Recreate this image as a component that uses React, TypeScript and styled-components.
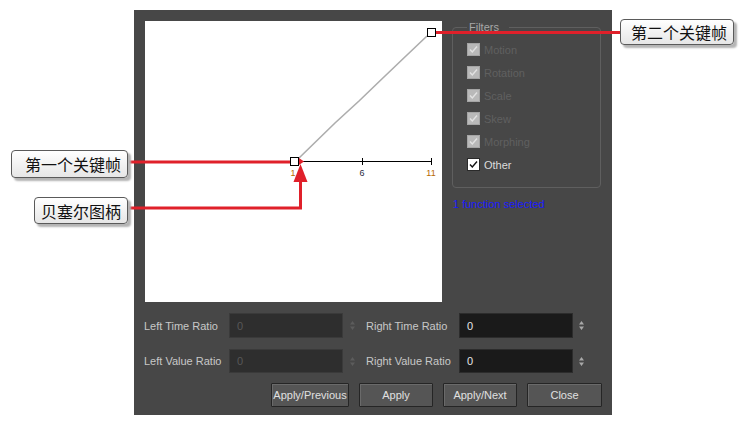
import React from "react";
import styled, { createGlobalStyle } from "styled-components";

const Global = createGlobalStyle`
  html, body { margin: 0; padding: 0; background: #ffffff; }
  * { box-sizing: border-box; }
`;

const Stage = styled.div`
  position: relative;
  width: 750px;
  height: 426px;
  overflow: hidden;
  background: #ffffff;
  padding: 10px 0 0 134px;
  font-family: "Liberation Sans", Arial, sans-serif;
`;

const Dialog = styled.div`
  width: 478px;
  height: 405px;
  background: #474747;
  padding: 11px 11px 8px 11px;
  display: flex;
  flex-direction: column;
`;

const Top = styled.div`
  display: flex;
  gap: 10px;
  height: 281px;
`;

const GraphPanel = styled.div`
  width: 297px;
  height: 281px;
  background: #ffffff;
  flex: none;
`;

const Side = styled.div`
  flex: 1;
  display: flex;
  flex-direction: column;
`;

const FilterGroup = styled.fieldset`
  margin: 0;
  padding: 4px 0 11px 14px;
  border: 1px solid #5f5f5f;
  border-radius: 4px;
  display: flex;
  flex-direction: column;
`;

const Legend = styled.legend`
  padding: 0 10px 0 2px;
  margin-left: 0;
  font-size: 11px;
  line-height: 13px;
  color: #a8a8a8;
`;

const CheckRow = styled.div`
  display: flex;
  align-items: center;
  height: 23px;
  gap: 4px;
`;

const Box = styled.span<{ $on: boolean }>`
  width: 13px;
  height: 13px;
  flex: none;
  display: flex;
  align-items: center;
  justify-content: center;
  background: ${(p) => (p.$on ? "#ffffff" : "#b9b9b9")};
  border: 1px solid ${(p) => (p.$on ? "#2a2a2a" : "#a5a5a5")};
`;

const CheckLabel = styled.span<{ $on: boolean }>`
  font-size: 11px;
  color: ${(p) => (p.$on ? "#dcdcdc" : "#606060")};
`;

const Status = styled.div`
  margin-top: 10px;
  font-size: 11px;
  color: #1a1aff;
  padding-left: 1px;
`;

const Fields = styled.div`
  margin-top: 11px;
  display: grid;
  grid-template-columns: 84px 114px 24px 92px 114px 1fr;
  grid-template-rows: 25px 24px;
  row-gap: 11px;
  align-items: center;
`;

const FieldLabel = styled.span`
  font-size: 11px;
  color: #c8c8c8;
  white-space: nowrap;
  margin-left: -1px;
`;

const Input = styled.div<{ $disabled?: boolean }>`
  height: 100%;
  display: flex;
  align-items: center;
  padding-left: 7px;
  font-size: 11px;
  background: ${(p) => (p.$disabled ? "#2e2e2e" : "#1a1a1a")};
  border: 1px solid ${(p) => (p.$disabled ? "#3a3a3a" : "#2c2c2c")};
  color: ${(p) => (p.$disabled ? "#585858" : "#e6e6e6")};
`;

const Spin = styled.span<{ $disabled?: boolean }>`
  display: flex;
  padding-left: ${(p) => (p.$disabled ? "7px" : "6px")};
  color: ${(p) => (p.$disabled ? "#5c5c5c" : "#a8a8a8")};
`;

const Buttons = styled.div`
  margin-top: 10px;
  display: flex;
  justify-content: flex-end;
  gap: 10px;
  margin-right: -1px;
`;

const Button = styled.button<{ $w: number }>`
  width: ${(p) => p.$w}px;
  height: 24px;
  padding: 0;
  font-family: "Liberation Sans", Arial, sans-serif;
  font-size: 11px;
  color: #e0e0e0;
  background: #555555;
  border: 1px solid #252525;
  box-shadow: inset 1px 1px 0 #6a6a6a;
  border-radius: 1px;
`;

const Overlay = styled.svg`
  position: absolute;
  left: 0;
  top: 0;
  pointer-events: none;
`;

const Callout = styled.div<{ $x: number; $y: number; $w: number; $h: number }>`
  position: absolute;
  left: ${(p) => p.$x}px;
  top: ${(p) => p.$y}px;
  width: ${(p) => p.$w}px;
  height: ${(p) => p.$h}px;
  display: flex;
  align-items: center;
  justify-content: flex-end;
  padding-right: 6px;
  font-family: "Noto Sans CJK SC", sans-serif;
  font-size: 16px;
  color: #111;
  background: linear-gradient(#ffffff, #e6e6e6);
  border: 1.5px solid #5a5a5a;
  border-radius: 4px;
  box-shadow: 3px 3px 2px #b4b4b4;
`;

const Check = ({ on }: { on: boolean }) => (
  <svg width="11" height="11" viewBox="0 0 11 11">
    <path
      d="M2 5.5 L4.3 8 L9 2.5"
      fill="none"
      stroke={on ? "#111" : "#e2e2e2"}
      strokeWidth="1.4"
    />
  </svg>
);

const SpinIcon = () => (
  <svg width="5" height="9" viewBox="0 0 5 9">
    <path d="M2.5 0 L5 3.5 L0 3.5 Z M0 5.5 L5 5.5 L2.5 9 Z" fill="currentColor" />
  </svg>
);

const Graph = () => (
  <svg width="297" height="281" viewBox="0 0 297 281">
    <path
      d="M153 138 L190 102 L214 80 L240 55 L262 34 L282 15"
      fill="none"
      stroke="#adadad"
      strokeWidth="1.6"
    />
    <line x1="153" y1="140.5" x2="286" y2="140.5" stroke="#000" strokeWidth="1" />
    <line x1="217.5" y1="137" x2="217.5" y2="144" stroke="#000" strokeWidth="1" />
    <line x1="286.5" y1="137" x2="286.5" y2="144" stroke="#000" strokeWidth="1" />
    <rect x="282.5" y="7.5" width="8" height="8" fill="#fff" stroke="#000" strokeWidth="1" />
    <rect x="145.5" y="136.5" width="8" height="8" fill="#fff" stroke="#000" strokeWidth="1" />
    <path d="M154 137 L159 140.5 L154 144 Z" fill="#e0202a" />
    <text x="148" y="155" fontSize="9" fontFamily="Liberation Sans, Arial, sans-serif" fill="#b86a00" textAnchor="middle">1</text>
    <text x="217" y="155" fontSize="9" fontFamily="Liberation Sans, Arial, sans-serif" fill="#2a2a40" textAnchor="middle">6</text>
    <text x="286" y="155" fontSize="9" fontFamily="Liberation Sans, Arial, sans-serif" fill="#b86a00" textAnchor="middle">11</text>
  </svg>
);

const filters: { name: string; on: boolean }[] = [
  { name: "Motion", on: false },
  { name: "Rotation", on: false },
  { name: "Scale", on: false },
  { name: "Skew", on: false },
  { name: "Morphing", on: false },
  { name: "Other", on: true },
];

export default function App() {
  return (
    <Stage>
      <Global />
      <Dialog>
        <Top>
          <GraphPanel>
            <Graph />
          </GraphPanel>
          <Side>
            <FilterGroup>
              <Legend>Filters</Legend>
              {filters.map((f) => (
                <CheckRow key={f.name}>
                  <Box $on={f.on}>
                    <Check on={f.on} />
                  </Box>
                  <CheckLabel $on={f.on}>{f.name}</CheckLabel>
                </CheckRow>
              ))}
            </FilterGroup>
            <Status>1 function selected</Status>
          </Side>
        </Top>
        <Fields>
          <FieldLabel>Left Time Ratio</FieldLabel>
          <Input $disabled>0</Input>
          <Spin $disabled>
            <SpinIcon />
          </Spin>
          <FieldLabel>Right Time Ratio</FieldLabel>
          <Input>0</Input>
          <Spin>
            <SpinIcon />
          </Spin>
          <FieldLabel>Left Value Ratio</FieldLabel>
          <Input $disabled>0</Input>
          <Spin $disabled>
            <SpinIcon />
          </Spin>
          <FieldLabel>Right Value Ratio</FieldLabel>
          <Input>0</Input>
          <Spin>
            <SpinIcon />
          </Spin>
        </Fields>
        <Buttons>
          <Button $w={78}>Apply/Previous</Button>
          <Button $w={74}>Apply</Button>
          <Button $w={74}>Apply/Next</Button>
          <Button $w={75}>Close</Button>
        </Buttons>
      </Dialog>
      <Overlay width="750" height="426" viewBox="0 0 750 426">
        <line x1="436" y1="32.5" x2="621" y2="32.5" stroke="#e0202a" strokeWidth="3" />
        <line x1="127" y1="162" x2="290" y2="162" stroke="#e0202a" strokeWidth="3" />
        <path d="M127 208 L300.5 208 L300.5 180" fill="none" stroke="#e0202a" strokeWidth="3" />
        <path d="M300.5 164 L307.5 182 L293.5 182 Z" fill="#e0202a" />
      </Overlay>
      <Callout $x={620} $y={19} $w={114} $h={26}>第二个关键帧</Callout>
      <Callout $x={11} $y={150} $w={117} $h={28}>第一个关键帧</Callout>
      <Callout $x={34} $y={197} $w={94} $h={27}>贝塞尔图柄</Callout>
    </Stage>
  );
}
